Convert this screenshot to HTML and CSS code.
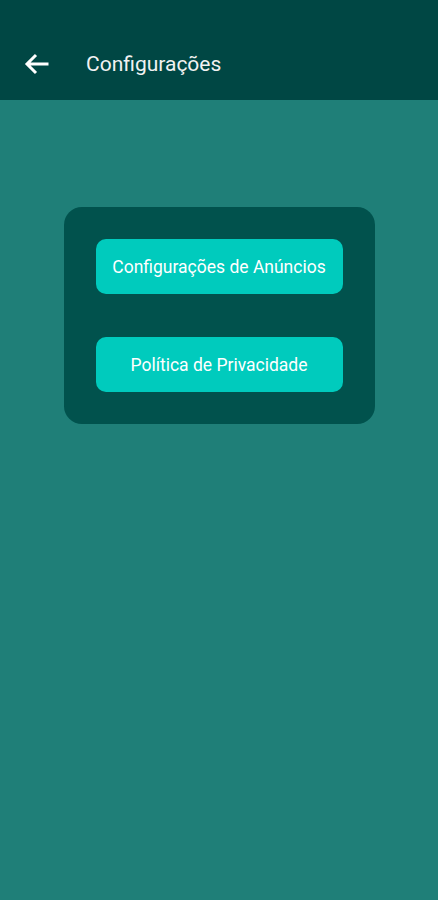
FILE: index.html
```html
<!DOCTYPE html>
<html lang="pt">
<head>
  <meta charset="UTF-8" />
  <meta name="viewport" content="width=device-width, initial-scale=1.0"/>
  <title>Configurações</title>
  <link rel="stylesheet" href="styles.css">
</head>
<body>

<header class="topbar">
  <svg class="back" width="26" height="22" viewBox="0 0 26 22">
    <path d="M24.5 11H3M12 2L3 11l9 9" fill="none" stroke="#fff" stroke-width="3"/>
  </svg>
  <h1>Configurações</h1>
</header>

<main class="content">
  <div class="panel">
    <button class="btn">Configurações de Anúncios</button>
    <button class="btn">Política de Privacidade</button>
  </div>
</main>

</body>
</html>
```

FILE: styles.css
```css
body {
  font-family: Roboto, 'Noto Sans', sans-serif;
  background: #1f7f78;
  color: #fff;
  margin: 0;
  padding: 0;
  min-height: 900px;
}
.topbar {
  height: 100px;
  background: #004744;
  display: flex;
  align-items: center;
  padding: 28px 0 0 24px;
  box-sizing: border-box;
}
.back {
  flex: none;
}
.topbar h1 {
  margin: 0 0 0 36px;
  font-size: 21px;
  font-weight: 400;
  color: #f2f2f2;
}
.content {
  display: flex;
  justify-content: center;
  padding-top: 107px;
}
.panel {
  width: 311px;
  box-sizing: border-box;
  background: #01524d;
  border-radius: 18px;
  padding: 32px;
  display: flex;
  flex-direction: column;
  gap: 43px;
}
.btn {
  height: 55px;
  background: #00cbbd;
  color: #fff;
  font-family: Roboto, sans-serif;
  font-size: 17.5px;
  border: none;
  border-radius: 10px;
  cursor: pointer;
}
```
